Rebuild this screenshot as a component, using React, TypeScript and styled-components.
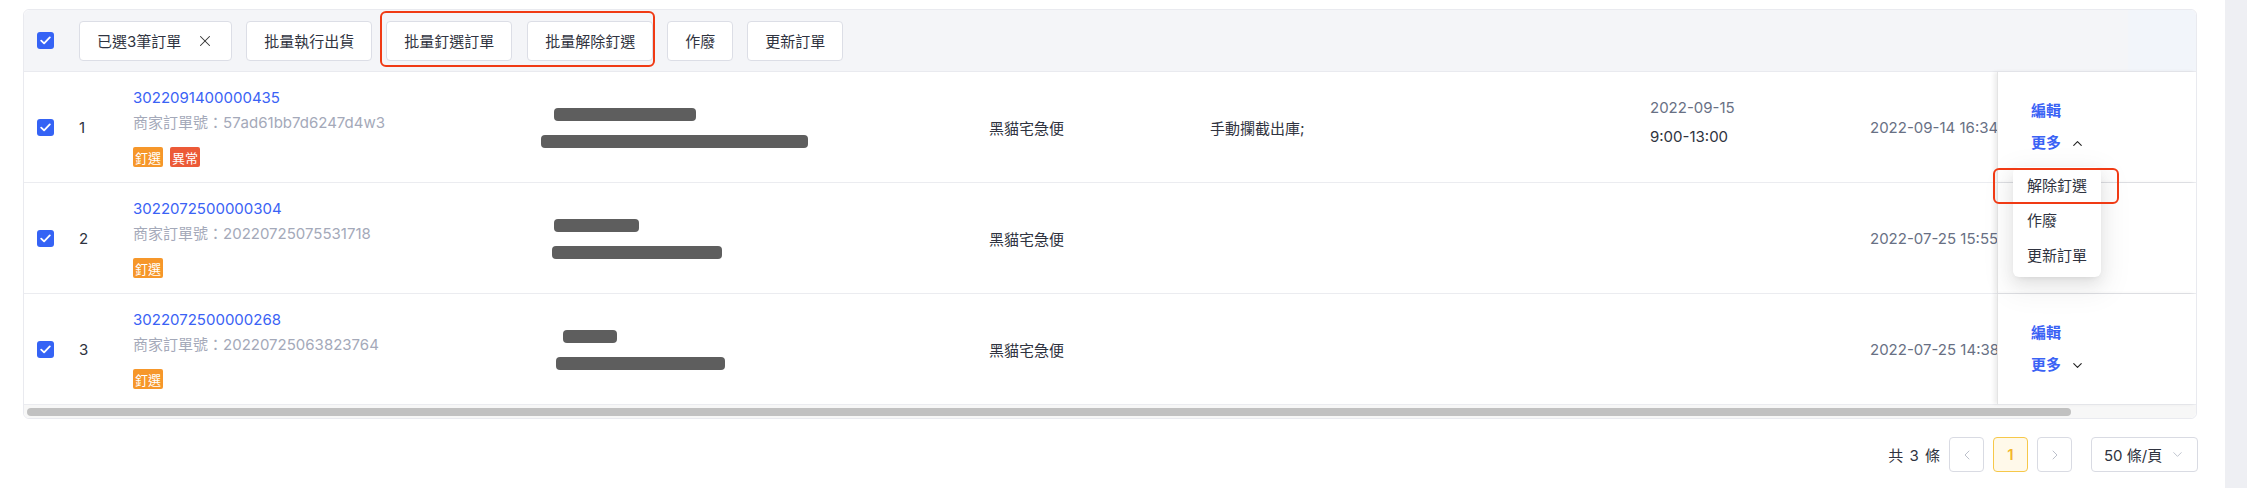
import React from 'react';
import styled, { createGlobalStyle, css } from 'styled-components';
import { X, ChevronUp, ChevronDown, ChevronLeft, ChevronRight } from 'lucide-react';

const GlobalStyle = createGlobalStyle`
  html, body {
    margin: 0;
    padding: 0;
    background: #fff;
  }
  body {
    font-family: Inter, "Noto Sans CJK TC", "Noto Sans", sans-serif;
    color: #2f3340;
    font-size: 15px;
  }
  * {
    box-sizing: border-box;
  }
`;

const COLS = '41px 54px 407px 449px 221px 440px 220px 141px 199px';

const Page = styled.div`
  display: flex;
  min-height: 100vh;
`;

const Main = styled.div`
  flex: 1;
  padding: 9px 28px 0 23px;
`;

const SideStrip = styled.div`
  width: 22px;
  background: #eeeff3;
`;

const Table = styled.div`
  position: relative;
  border: 1px solid #e9eaef;
  border-radius: 6px;
  background: #fff;
`;

const HeaderBar = styled.div`
  display: flex;
  align-items: center;
  height: 62px;
  padding-left: 13px;
  background: #f4f5f8;
  border-bottom: 1px solid #e9eaef;
  border-radius: 6px 6px 0 0;
`;

const HeaderTail = styled.div`
  margin-left: auto;
  align-self: stretch;
  width: 68px;
  background: #f2f5fa;
  border-radius: 0 6px 0 0;
`;

const Check = styled.span`
  display: inline-flex;
  align-items: center;
  justify-content: center;
  width: 17px;
  height: 17px;
  border-radius: 3px;
  background: #3563f5;
  flex-shrink: 0;
`;

const Toolbar = styled.div`
  display: flex;
  align-items: center;
  gap: 14px;
  margin-left: 25px;
`;

const ToolButton = styled.button`
  display: inline-flex;
  align-items: center;
  gap: 15px;
  height: 40px;
  padding: 0 17px;
  border: 1px solid #dcdee6;
  border-radius: 4px;
  background: #fff;
  font-family: inherit;
  font-size: 15px;
  color: #2f3340;
  white-space: nowrap;
`;

const Annotated = styled.div`
  position: relative;
  display: flex;
  gap: 15px;
  &::after {
    content: '';
    position: absolute;
    top: -10px;
    bottom: -6px;
    left: -6px;
    right: -2px;
    border: 2px solid #f03a14;
    border-radius: 6px;
    pointer-events: none;
  }
`;

const Row = styled.div`
  display: grid;
  grid-template-columns: ${COLS};
  border-bottom: 1px solid #ebecf0;
`;

const Cell = styled.div<{ $first?: boolean }>`
  display: flex;
  align-items: center;
  padding: 16px 0 15px ${(p) => (p.$first ? 13 : 14)}px;
  min-width: 0;
`;

const ClipCell = styled(Cell)`
  overflow: hidden;
  white-space: nowrap;
  color: #687084;
`;

const FixedCell = styled.div`
  display: flex;
  flex-direction: column;
  justify-content: center;
  gap: 12px;
  padding-left: 33px;
  border-left: 1px solid #e4e4e4;
  box-shadow: -3px 0 4px rgba(0, 0, 0, 0.07);
  background: #fff;
`;

const Index = styled.span`
  color: #2f3340;
  font-size: 15px;
`;

const OrderBlock = styled.div`
  display: flex;
  flex-direction: column;
`;

const OrderNo = styled.a`
  color: #3a62f5;
  font-size: 15px;
  line-height: 20px;
  text-decoration: none;
`;

const Merchant = styled.div`
  margin-top: 5px;
  color: #a4a9b9;
  font-size: 15px;
  line-height: 20px;
`;

const Tags = styled.div`
  display: flex;
  gap: 7px;
  margin-top: 14px;
`;

const Tag = styled.span<{ $kind: 'pin' | 'error' }>`
  display: inline-flex;
  align-items: center;
  height: 20px;
  padding: 0 2px;
  border-radius: 2px;
  color: #fff;
  font-size: 13px;
  background: ${(p) => (p.$kind === 'pin' ? '#f6972a' : '#ec5a37')};
`;

const Receiver = styled.div`
  display: flex;
  flex-direction: column;
  gap: 14px;
`;

const Redacted = styled.span<{ $w: number; $x: number; $h?: number }>`
  display: block;
  width: ${(p) => p.$w}px;
  height: ${(p) => p.$h ?? 13}px;
  margin-left: ${(p) => p.$x}px;
  border-radius: 4px;
  background: #5e5e5e;
`;

const Text = styled.span`
  color: #2f3340;
  font-size: 15px;
`;

const DateBlock = styled.div`
  display: flex;
  flex-direction: column;
  gap: 9px;
  margin-bottom: 11px;
  line-height: 20px;
`;

const GrayDate = styled.span`
  color: #687084;
`;

const ActionLink = styled.span`
  display: inline-flex;
  align-items: center;
  gap: 9px;
  color: #3a62f5;
  font-weight: 600;
  font-size: 15px;
  line-height: 20px;
  svg {
    color: #222;
  }
`;

const Menu = styled.div`
  position: absolute;
  left: 1989px;
  top: 157px;
  width: 88px;
  padding-bottom: 5px;
  border-radius: 6px;
  background: #fff;
  box-shadow: 0 6px 16px rgba(0, 0, 0, 0.08), 0 3px 6px -4px rgba(0, 0, 0, 0.12),
    0 9px 28px 8px rgba(0, 0, 0, 0.05);
`;

const MenuItem = styled.div<{ $marked?: boolean }>`
  position: relative;
  height: 35px;
  display: flex;
  align-items: center;
  padding-left: 14px;
  color: #2f3340;
  font-size: 15px;
  ${(p) =>
    p.$marked &&
    css`
      &::after {
        content: '';
        position: absolute;
        left: -20px;
        right: -18px;
        top: 1px;
        bottom: -2px;
        border: 2px solid #f03a14;
        border-radius: 6px;
      }
    `}
`;

const ScrollTrack = styled.div`
  height: 13px;
  padding: 3px 0 0 3px;
  background: #f7f7f7;
  border-radius: 0 0 6px 6px;
`;

const ScrollThumb = styled.div`
  width: 2044px;
  height: 8px;
  border-radius: 4px;
  background: #c1c1c1;
`;

const Pager = styled.div`
  display: flex;
  align-items: center;
  justify-content: flex-end;
  gap: 9px;
  margin-top: 18px;
  margin-right: -1px;
`;

const Total = styled.span`
  color: #2f3340;
  font-size: 15px;
  word-spacing: 2px;
`;

const PageBtn = styled.span<{ $active?: boolean }>`
  display: inline-flex;
  align-items: center;
  justify-content: center;
  width: 35px;
  height: 35px;
  border-radius: 4px;
  border: 1px solid ${(p) => (p.$active ? '#f6c84a' : '#d9dbe3')};
  background: ${(p) => (p.$active ? '#fff9ea' : '#fff')};
  color: ${(p) => (p.$active ? '#f3b72d' : '#b7bbc7')};
  font-weight: 600;
  font-size: 15px;
`;

const SizeSelect = styled.span`
  display: inline-flex;
  align-items: center;
  justify-content: space-between;
  width: 107px;
  height: 35px;
  margin-left: 10px;
  padding: 0 12px;
  border: 1px solid #d9dbe3;
  border-radius: 4px;
  color: #2f3340;
  font-size: 15px;
  svg {
    color: #b7bbc7;
  }
`;

function CheckBox() {
  return (
    <Check>
      <svg width="11" height="9" viewBox="0 0 11 9">
        <path d="M1.2 4.6 L4.1 7.4 L9.8 1.4" fill="none" stroke="#fff" strokeWidth="1.8" strokeLinecap="round" strokeLinejoin="round" />
      </svg>
    </Check>
  );
}

type Order = {
  no: string;
  merchant: string;
  tags: ('pin' | 'error')[];
  receiver: [number, number, number, number];
  note?: string;
  delivery?: [string, string];
  created: string;
  open?: boolean;
};

const orders: Order[] = [
  {
    no: '3022091400000435',
    merchant: '57ad61bb7d6247d4w3',
    tags: ['pin', 'error'],
    receiver: [14, 142, 1, 267],
    note: '手動攔截出庫;',
    delivery: ['2022-09-15', '9:00-13:00'],
    created: '2022-09-14 16:34:12',
    open: true,
  },
  {
    no: '3022072500000304',
    merchant: '20220725075531718',
    tags: ['pin'],
    receiver: [14, 85, 12, 170],
    created: '2022-07-25 15:55:40',
  },
  {
    no: '3022072500000268',
    merchant: '20220725063823764',
    tags: ['pin'],
    receiver: [23, 54, 16, 169],
    created: '2022-07-25 14:38:02',
  },
];

export default function App() {
  return (
    <Page>
      <GlobalStyle />
      <Main>
        <Table>
          <HeaderBar>
            <CheckBox />
            <Toolbar>
              <ToolButton>
                已選3筆訂單 <X size={18} strokeWidth={1.4} color="#333" />
              </ToolButton>
              <ToolButton>批量執行出貨</ToolButton>
              <Annotated>
                <ToolButton>批量釘選訂單</ToolButton>
                <ToolButton>批量解除釘選</ToolButton>
              </Annotated>
              <ToolButton>作廢</ToolButton>
              <ToolButton>更新訂單</ToolButton>
            </Toolbar>
            <HeaderTail />
          </HeaderBar>

          {orders.map((o, i) => (
            <Row key={o.no}>
              <Cell $first>
                <CheckBox />
              </Cell>
              <Cell>
                <Index>{i + 1}</Index>
              </Cell>
              <Cell>
                <OrderBlock>
                  <OrderNo>{o.no}</OrderNo>
                  <Merchant>商家訂單號：{o.merchant}</Merchant>
                  <Tags>
                    {o.tags.map((t) => (
                      <Tag key={t} $kind={t}>
                        {t === 'pin' ? '釘選' : '異常'}
                      </Tag>
                    ))}
                  </Tags>
                </OrderBlock>
              </Cell>
              <Cell>
                <Receiver>
                  <Redacted $x={o.receiver[0]} $w={o.receiver[1]} />
                  <Redacted $x={o.receiver[2]} $w={o.receiver[3]} />
                </Receiver>
              </Cell>
              <Cell>
                <Text>黑貓宅急便</Text>
              </Cell>
              <Cell>
                <Text>{o.note}</Text>
              </Cell>
              <Cell>
                {o.delivery && (
                  <DateBlock>
                    <GrayDate>{o.delivery[0]}</GrayDate>
                    <Text>{o.delivery[1]}</Text>
                  </DateBlock>
                )}
              </Cell>
              <ClipCell>{o.created}</ClipCell>
              <FixedCell>
                <ActionLink>編輯</ActionLink>
                <ActionLink>
                  更多
                  {o.open ? <ChevronUp size={15} strokeWidth={1.8} /> : <ChevronDown size={15} strokeWidth={1.8} />}
                </ActionLink>
              </FixedCell>
            </Row>
          ))}

          <ScrollTrack>
            <ScrollThumb />
          </ScrollTrack>

          <Menu>
            <MenuItem $marked>解除釘選</MenuItem>
            <MenuItem>作廢</MenuItem>
            <MenuItem>更新訂單</MenuItem>
          </Menu>
        </Table>

        <Pager>
          <Total>共 3 條</Total>
          <PageBtn>
            <ChevronLeft size={16} strokeWidth={1.4} />
          </PageBtn>
          <PageBtn $active>1</PageBtn>
          <PageBtn>
            <ChevronRight size={16} strokeWidth={1.4} />
          </PageBtn>
          <SizeSelect>
            50 條/頁 <ChevronDown size={15} strokeWidth={1.4} />
          </SizeSelect>
        </Pager>
      </Main>
      <SideStrip />
    </Page>
  );
}
